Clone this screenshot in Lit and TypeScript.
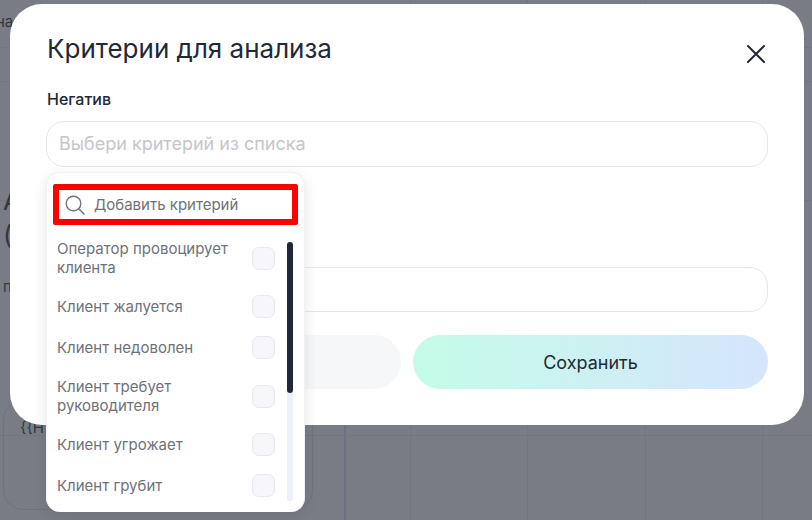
import { LitElement, html, css } from "lit";
import { customElement } from "lit/decorators.js";

const items = [
  "Оператор провоцирует клиента",
  "Клиент жалуется",
  "Клиент недоволен",
  "Клиент требует руководителя",
  "Клиент угрожает",
  "Клиент грубит",
];

@customElement("app-root")
export class AppRoot extends LitElement {
  static styles = css`
    :host { display: block; width: 812px; height: 520px; position: relative; overflow: hidden; background: #797c85; font-family: Inter, "Liberation Sans", sans-serif; color: #222835; }
    .bg { position: absolute; inset: 0; }
    .vl { position: absolute; top: 0; bottom: 0; width: 1px; background: #73767f; }
    .hl { position: absolute; left: 0; right: 0; height: 1px; background: #73767f; }
    .purple { width: 2px; background: #6c6d88; top: 425px; }
    .bgt { position: absolute; color: #33363f; font-size: 15px; line-height: 18px; white-space: nowrap; }
    .big { font-size: 26px; line-height: 34px; }
    .card { position: absolute; left: 3px; top: 400px; width: 310px; height: 110px; border: 1px solid #6f727b; border-radius: 20px; box-sizing: border-box; }
    .modal { position: absolute; left: 10px; top: 4px; width: 794px; height: 421px; box-sizing: border-box; padding: 27px 36px 36px 36px; background: #fff; border-radius: 32px; display: flex; flex-direction: column; }
    .head { display: flex; justify-content: space-between; align-items: flex-start; height: 48px; padding-left: 1px; }
    h1 { margin: 0; font-size: 26px; line-height: 36px; font-weight: 400; letter-spacing: 0; }
    .x { width: 24px; height: 24px; margin-top: 11px; display: block; }
    .label { font-size: 16px; line-height: 20px; font-weight: 500; padding-left: 1px; margin-top: 11px; }
    .field { height: 46px; box-sizing: border-box; border: 1px solid #e6e6f0; border-radius: 18px; margin-top: 12px; padding: 0 12px; display: flex; align-items: center; color: #c4c6cb; font-size: 18px; background: #fff; }
    .field.second { margin-top: 100px; }
    .btns { display: grid; grid-template-columns: 355px 355px; gap: 12px; margin-top: 23px; }
    .btn { height: 54px; border-radius: 27px; display: flex; align-items: center; justify-content: center; font-size: 18px; }
    .cancel { background: #f6f7f9; }
    .save { background: linear-gradient(90deg, #c4fce8 0%, #d5e5fd 100%); }
    .drop { position: absolute; left: 36px; top: 168px; width: 259px; height: 340px; box-sizing: border-box; background: #fff; border: 1px solid #f0f0f5; border-bottom: 0; border-radius: 14px; box-shadow: 0 4px 14px rgba(40,40,60,.12); padding: 11px 6px 0 6px; }
    .search { height: 41px; box-sizing: border-box; border: 6px solid #f00; border-radius: 2px; display: flex; align-items: center; padding-left: 6px; gap: 9px; color: #6f7178; font-size: 15px; }
    .search svg { width: 20px; height: 20px; flex: none; }
    .body { position: relative; margin-top: 14px; padding-left: 4px; }
    .list { display: flex; flex-direction: column; gap: 18px; width: 218px; }
    .row { display: flex; align-items: center; justify-content: space-between; min-height: 23px; font-size: 15px; line-height: 19px; color: #6f7178; }
    .row span { width: 190px; }
    .cb { width: 23px; height: 23px; box-sizing: border-box; border: 1px solid #e8e8f2; background: #f6f6fb; border-radius: 7px; flex: none; }
    .track { position: absolute; left: 234px; top: 3px; width: 6px; height: 259px; border-radius: 3px; background: #eef0f8; }
    .thumb { width: 6px; height: 151px; border-radius: 3px; background: #222835; }
  `;

  render() {
    return html`
      <div class="bg">
        ${[410, 527, 645, 762].map((x) => html`<div class="vl" style="left:${x}px"></div>`)}
        <div class="vl purple" style="left:344px"></div>
        <div class="hl" style="top:47px"></div>
        <div class="hl" style="top:81px"></div>
        <div class="hl" style="top:200px"></div>
        <div class="hl" style="top:435px"></div>
        <div class="bgt" style="left:-4px;top:13px">нал</div>
        <div class="bgt big" style="left:3px;top:184px">А</div>
        <div class="bgt big" style="left:3px;top:218px">(</div>
        <div class="bgt" style="left:3px;top:278px">п</div>
        <div class="card"></div>
        <div class="bgt" style="left:20px;top:419px">{{H</div>
      </div>
      <div class="modal">
        <div class="head">
          <h1>Критерии для анализа</h1>
          <svg class="x" viewBox="0 0 24 24" fill="none" stroke="#222835" stroke-width="2" stroke-linecap="round"><path d="M4 4L20 20M20 4L4 20"/></svg>
        </div>
        <div class="label">Негатив</div>
        <div class="field">Выбери критерий из списка</div>
        <div class="field second"></div>
        <div class="btns">
          <div class="btn cancel"></div>
          <div class="btn save">Сохранить</div>
        </div>
        <div class="drop">
          <div class="search">
            <svg viewBox="0 0 20 20" fill="none" stroke="#6f7480" stroke-width="1.4" stroke-linecap="round"><circle cx="8.5" cy="8.5" r="7.3"/><path d="M14 14L19 19"/></svg>
            <span>Добавить критерий</span>
          </div>
          <div class="body">
            <div class="list">
              ${items.map((t) => html`<div class="row"><span>${t}</span><div class="cb"></div></div>`)}
            </div>
            <div class="track"><div class="thumb"></div></div>
          </div>
        </div>
      </div>
    `;
  }
}
